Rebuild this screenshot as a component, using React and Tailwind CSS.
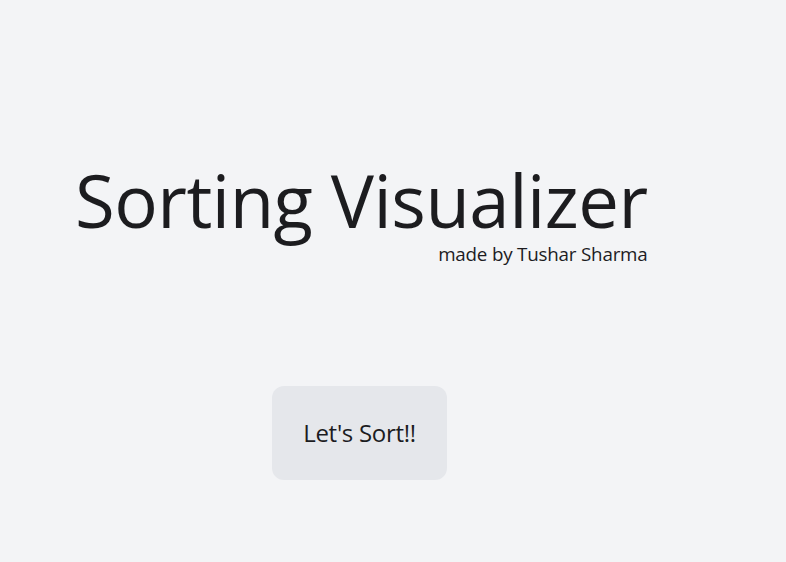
export default function App() {
  return (
    <main className="min-h-screen bg-gray-100 text-[#1c1c1f]" style={{ fontFamily: '"Open Sans", "Noto Sans", sans-serif' }}>
      <div className="flex pl-[75px] pt-[160px]">
        <div className="flex flex-col">
          <h1 className="text-[72.5px] leading-[80px] font-normal tracking-[-0.5px]">Sorting Visualizer</h1>
          <p className="self-end mt-[2px] text-[18.8px] leading-6 tracking-[-0.2px]">made by Tushar Sharma</p>
          <button
            type="button"
            className="self-start ml-[197px] mt-[120px] w-[175px] h-[94px] rounded-xl bg-gray-200 text-[24px] tracking-[-0.3px]"
          >
            Let's Sort!!
          </button>
        </div>
      </div>
    </main>
  );
}
